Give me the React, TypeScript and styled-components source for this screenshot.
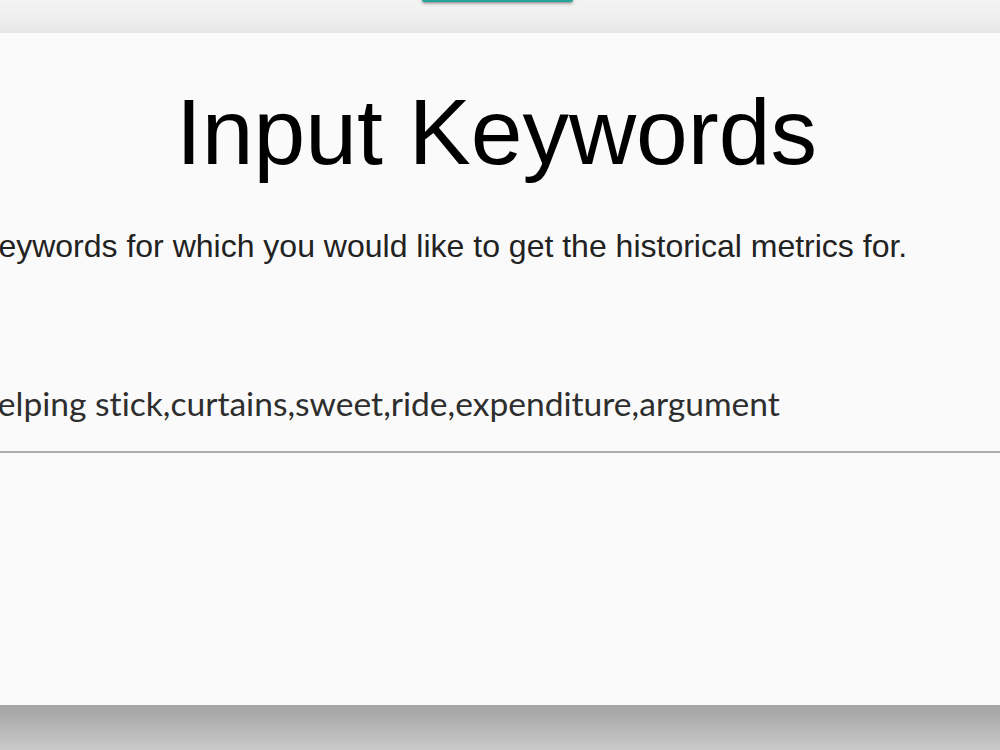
import React from "react";
import styled, { createGlobalStyle } from "styled-components";

const Global = createGlobalStyle`
  html, body { margin: 0; padding: 0; overflow: hidden; background: #f7f7f7; }
  body { font-family: "Liberation Sans", Arial, sans-serif; }
`;

const Page = styled.div`
  width: 1000px;
  height: 750px;
  display: flex;
  flex-direction: column;
  align-items: center;
  overflow: hidden;
`;

const TopBar = styled.div`
  width: 100%;
  height: 33px;
  flex-shrink: 0;
  display: flex;
  justify-content: center;
`;

const ActionButton = styled.button`
  width: 151px;
  height: 36px;
  margin-top: -34px;
  margin-left: -5px;
  border: none;
  border-radius: 2px;
  background: #26a69a;
  box-shadow: 0 2px 2px 0 rgba(0, 0, 0, 0.14), 0 3px 1px -2px rgba(0, 0, 0, 0.12),
    0 1px 5px 0 rgba(0, 0, 0, 0.2);
`;

const Card = styled.section`
  width: 1300px;
  height: 672px;
  flex-shrink: 0;
  margin-left: -2px;
  box-sizing: border-box;
  padding: 53px 53px 0 48px;
  background: #fafafa;
  box-shadow: 0 40px 80px rgba(0, 0, 0, 0.4);
  display: flex;
  flex-direction: column;
`;

const Title = styled.h1`
  margin: 0;
  font-family: "Liberation Sans", Arial, sans-serif;
  font-weight: 400;
  font-size: 93px;
  line-height: 93px;
  text-align: center;
  color: #000;
`;

const Lead = styled.p`
  margin: 51px 0 0;
  font-family: "Liberation Sans", Arial, sans-serif;
  font-size: 32px;
  line-height: 32px;
  color: #222;
`;

const KeywordInput = styled.input`
  display: block;
  margin: 121px 0 0;
  height: 40px;
  padding: 0 0 28px 82px;
  box-sizing: content-box;
  width: auto;
  border: none;
  border-bottom: 2px solid #acacac;
  outline: none;
  background: transparent;
  font-family: Lato, "Segoe UI", "Open Sans", sans-serif;
  font-size: 33.6px;
  font-variant-ligatures: none;
  font-feature-settings: "liga" 0, "clig" 0;
  line-height: normal;
  color: #2e2e2e;
`;

export default function App() {
  return (
    <>
      <Global />
      <Page>
        <TopBar>
          <ActionButton type="button" aria-label="Submit" />
        </TopBar>
        <Card>
          <Title>Input Keywords</Title>
          <Lead>Enter keywords for which you would like to get the historical metrics for.</Lead>
          <KeywordInput
            type="text"
            aria-label="Keywords"
            defaultValue="helping stick,curtains,sweet,ride,expenditure,argument"
          />
        </Card>
      </Page>
    </>
  );
}
